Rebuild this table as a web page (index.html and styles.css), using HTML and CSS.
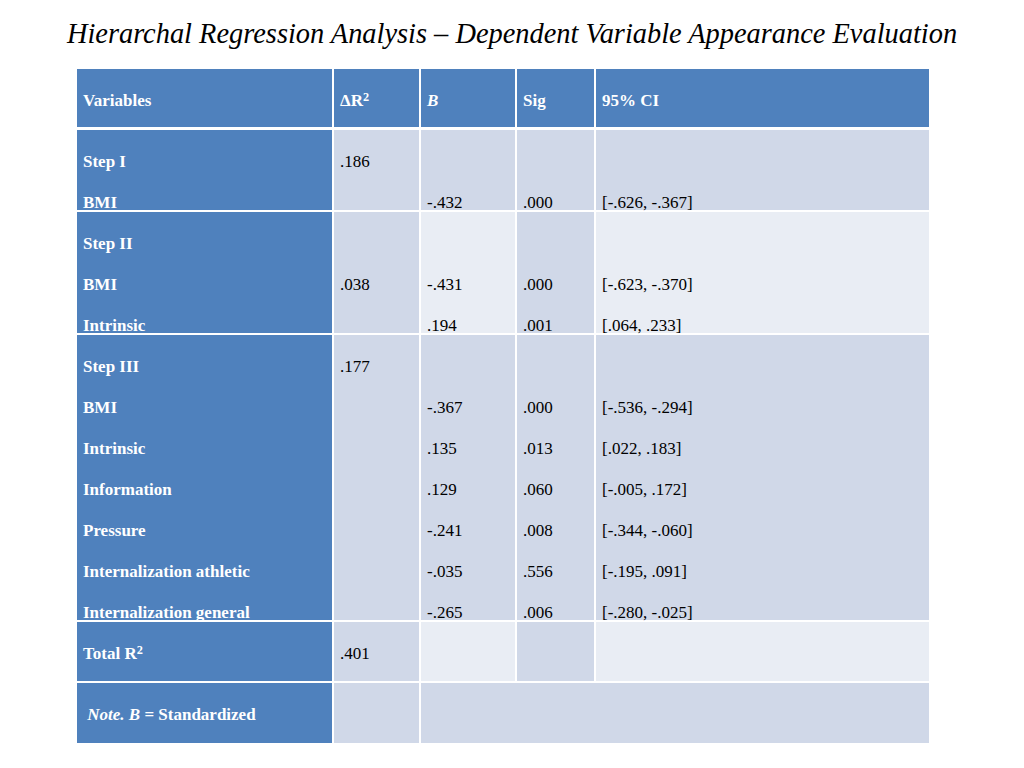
FILE: index.html
```html
<!DOCTYPE html>
<html lang="en">
<head>
<meta charset="utf-8">
<title>Hierarchal Regression Analysis</title>
<link rel="stylesheet" href="styles.css">
</head>
<body>
<h1 class="title">Hierarchal Regression Analysis – Dependent Variable Appearance Evaluation</h1>
<div class="table">
  <div class="cell head"><span>Variables</span></div>
  <div class="cell head"><span>ΔR<sup>2</sup></span></div>
  <div class="cell head"><span><i>B</i></span></div>
  <div class="cell head"><span>Sig</span></div>
  <div class="cell head"><span>95% CI</span></div>

  <div class="cell first"><span>Step I</span><span>BMI</span></div>
  <div class="cell dark"><span>.186</span></div>
  <div class="cell dark"><span></span><span>-.432</span></div>
  <div class="cell dark"><span></span><span>.000</span></div>
  <div class="cell dark"><span></span><span>[-.626, -.367]</span></div>

  <div class="cell first"><span>Step II</span><span>BMI</span><span>Intrinsic</span></div>
  <div class="cell dark"><span></span><span>.038</span></div>
  <div class="cell light"><span></span><span>-.431</span><span>.194</span></div>
  <div class="cell dark"><span></span><span>.000</span><span>.001</span></div>
  <div class="cell light"><span></span><span>[-.623, -.370]</span><span>[.064, .233]</span></div>

  <div class="cell first"><span>Step III</span><span>BMI</span><span>Intrinsic</span><span>Information</span><span>Pressure</span><span>Internalization athletic</span><span>Internalization general</span></div>
  <div class="cell dark"><span>.177</span></div>
  <div class="cell dark"><span></span><span>-.367</span><span>.135</span><span>.129</span><span>-.241</span><span>-.035</span><span>-.265</span></div>
  <div class="cell dark"><span></span><span>.000</span><span>.013</span><span>.060</span><span>.008</span><span>.556</span><span>.006</span></div>
  <div class="cell dark"><span></span><span>[-.536, -.294]</span><span>[.022, .183]</span><span>[-.005, .172]</span><span>[-.344, -.060]</span><span>[-.195, .091]</span><span>[-.280, -.025]</span></div>

  <div class="cell first"><span>Total R<sup>2</sup></span></div>
  <div class="cell dark"><span>.401</span></div>
  <div class="cell light"></div>
  <div class="cell dark"></div>
  <div class="cell light"></div>

  <div class="cell first"><span>&nbsp;<i>Note. B</i> = Standardized</span></div>
  <div class="cell dark"></div>
  <div class="cell dark span3"></div>
</div>
</body>
</html>
```

FILE: styles.css
```css
html, body {
  margin: 0;
  padding: 0;
  background: #ffffff;
}

body {
  width: 1024px;
  height: 768px;
  font-family: "Liberation Serif", "Times New Roman", serif;
  color: #000000;
}

.title {
  margin: 0;
  padding-top: 17px;
  height: 34px;
  font-size: 28.4px;
  line-height: 34px;
  font-weight: normal;
  font-style: italic;
  text-align: center;
  white-space: nowrap;
}

.table {
  margin: 18px 0 0 77px;
  width: 852px;
  display: grid;
  grid-template-columns: 255px 85px 94px 77px 333px;
  grid-template-rows: 59px 80px 121px 285px 59px 60px;
  column-gap: 2px;
  row-gap: 2px;
}

.cell {
  display: flex;
  flex-direction: column;
  gap: 21px;
  padding: 22px 6px 0;
  font-size: 17px;
  line-height: 20px;
  white-space: nowrap;
  min-width: 0;
  min-height: 0;
}

.cell span {
  display: block;
  flex-shrink: 0;
  height: 20px;
}

.cell sup {
  font-size: 0.72em;
  line-height: 0;
  vertical-align: 0.42em;
}

.head {
  height: 58px;
  box-sizing: border-box;
  background: #4f81bd;
  color: #ffffff;
  font-weight: bold;
}

.first {
  background: #4f81bd;
  color: #ffffff;
  font-weight: bold;
}

.dark {
  background: #d0d8e8;
}

.light {
  background: #e9edf4;
}

.span3 {
  grid-column: span 3;
}
```
